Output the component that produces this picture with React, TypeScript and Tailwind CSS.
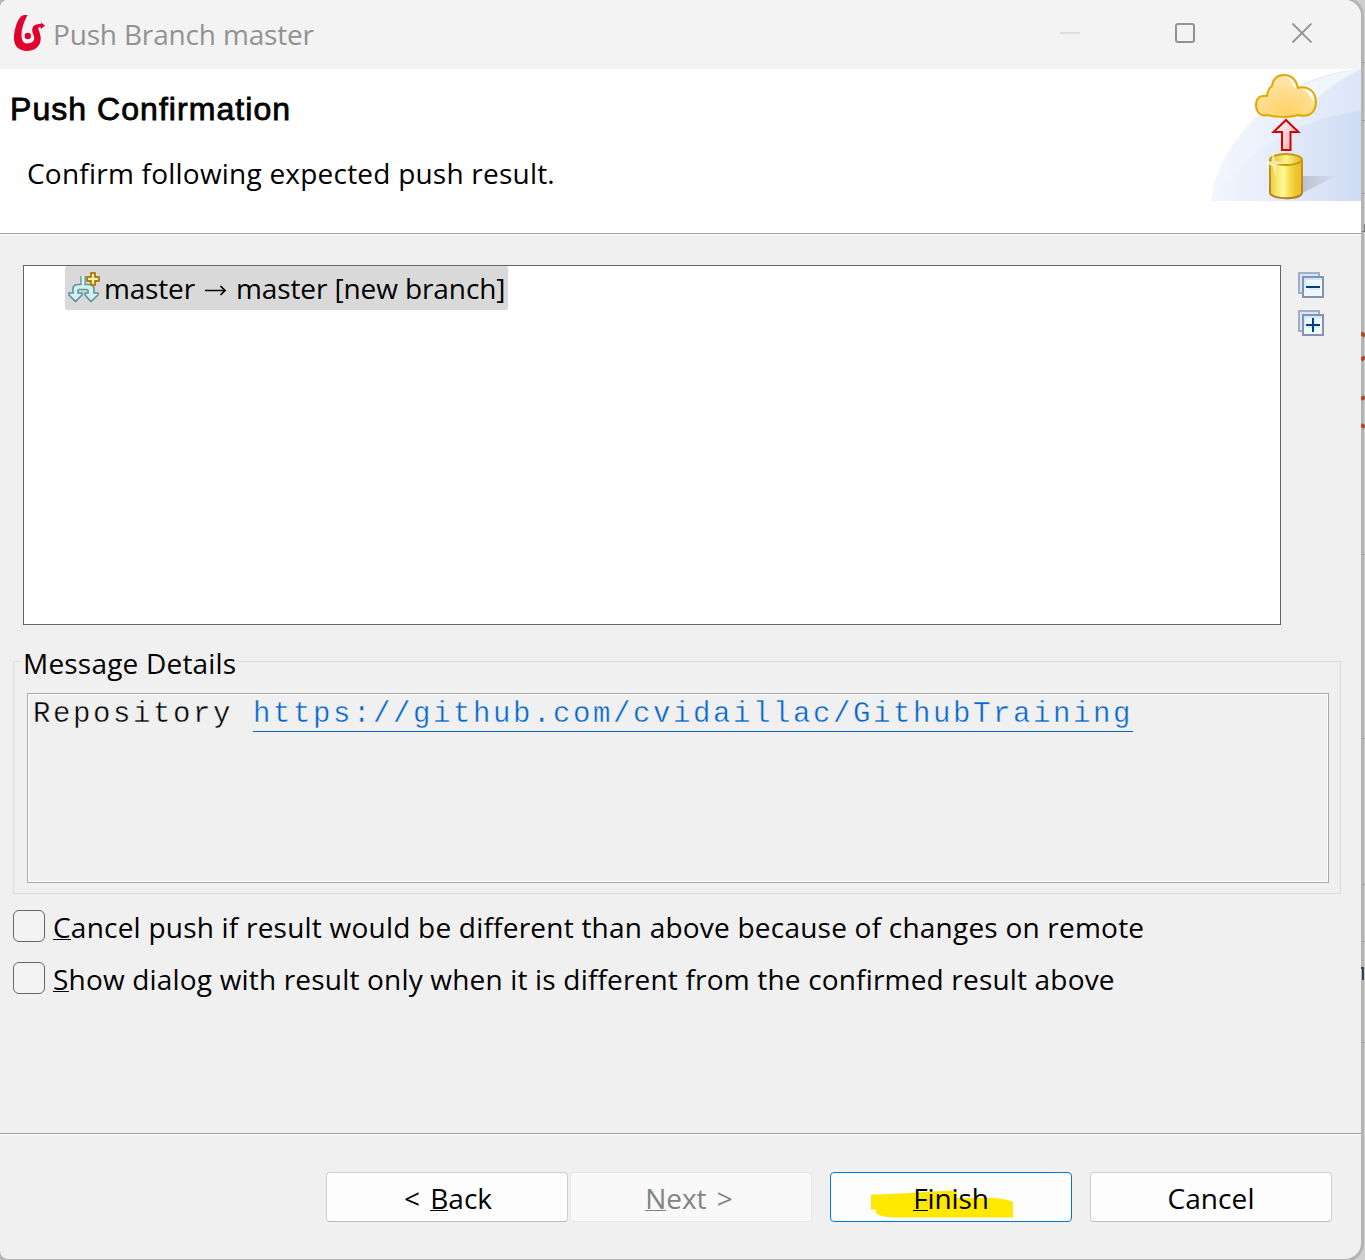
import type { ReactNode } from 'react';

const ui = "font-['Open_Sans','Noto_Sans',sans-serif] text-[28px] leading-[40px] whitespace-pre";

function Logo() {
  return (
    <svg width="32" height="38" viewBox="0 0 32 38" className="shrink-0">
      <path d="M11 1 H14.500 C11 8 8.500 14 8.500 20.500 C8.500 26 10 29.500 14 29.500 C19.500 29.500 22 26.500 21 22.500 C20 19.500 18.500 17 19.500 14 C20.500 11 23 10 28 10 L27.500 8.200 L32 11.500 L28 15 L27.500 13 C25 13 25 14.500 26 17 C27.500 20.500 28.500 24.500 27 29 C25 34 20 37 14 37 C6 37 1.300 32 1 25.500 C0.700 17 4 5.500 8.500 2 Z" fill="#e2002d" />
      <circle cx="14.800" cy="22" r="3.200" fill="#e2002d" />
    </svg>
  );
}

function Banner() {
  return (
    <svg width="150" height="132" viewBox="0 0 150 132" className="shrink-0">
      <defs>
        <linearGradient id="sweep" x1="0" x2="1"><stop offset="0" stopColor="#f3f7fe" /><stop offset="0.5" stopColor="#e9effb" /><stop offset="1" stopColor="#dce6f8" /></linearGradient>
        <linearGradient id="inner" x1="0" x2="1"><stop offset="0" stopColor="#eef3fc" stopOpacity="0.2" /><stop offset="1" stopColor="#cfdbf5" /></linearGradient>
        <linearGradient id="sheen" x1="0" x2="1"><stop offset="0" stopColor="#ffffff" stopOpacity="0.3" /><stop offset="1" stopColor="#f1f5fd" /></linearGradient>
        <radialGradient id="cloud" cx="0.5" cy="0.85" r="0.75"><stop offset="0" stopColor="#ffd266" /><stop offset="1" stopColor="#ffe5a8" /></radialGradient>
        <linearGradient id="side" x1="0" x2="1"><stop offset="0" stopColor="#ecce3c" /><stop offset="0.2" stopColor="#f8e468" /><stop offset="0.42" stopColor="#fffa9c" /><stop offset="0.6" stopColor="#f7dd55" /><stop offset="0.8" stopColor="#efc52d" /><stop offset="1" stopColor="#edbd2b" /></linearGradient>
        <linearGradient id="lid" x1="0" x2="1"><stop offset="0" stopColor="#dfba23" /><stop offset="0.5" stopColor="#fdf38c" /><stop offset="1" stopColor="#e2b422" /></linearGradient>
        <linearGradient id="rim" x1="0" y1="0" x2="0" y2="1"><stop offset="0" stopColor="#c99c00" /><stop offset="1" stopColor="#b57b32" /></linearGradient>
        <linearGradient id="arrow" x1="0" x2="1" y2="1"><stop offset="0" stopColor="#ffffff" /><stop offset="1" stopColor="#f1a6a6" /></linearGradient>
        <linearGradient id="shade" x1="0" x2="1"><stop offset="0" stopColor="#b9bfcd" /><stop offset="1" stopColor="#ccd4e5" stopOpacity="0.5" /></linearGradient>
      </defs>
      <path d="M0 132 C4 82 62 6 150 0 V132 Z" fill="url(#sweep)" />
      <path d="M51 42 C80 20 112 4 150 0 C123 13 103 29 88 51 Z" fill="url(#sheen)" />
      <path d="M0 132 C32 82 92 48 150 42 V132 Z" fill="url(#inner)" />
      <path d="M91 107 H126 L91 124 Z" fill="url(#shade)" />
      <path d="M56 27 C56.500 22 58 19 61 17 C62 10 66 6 73 6 C80 6 85 10 87 19 C96 16 105 22 105 33 C105 43 98 49 87 46 C79 49 63 48 56 46 C50 48 45 43 45 36 C45 29 50 25.500 56 27 Z" fill="url(#cloud)" stroke="#e6a600" strokeWidth="2" strokeLinejoin="round" />
      <path d="M74 8 C81 8 84 13 85.500 20 L81 16 C81 12 79 10 74 8 Z M92 21 C99 19 103 25 103 33 C99 29 99 24 92 21 Z" fill="white" />
      <path d="M75 51 L87.500 63 H79.500 V81 H71 V63 H62.500 Z" fill="url(#arrow)" stroke="#d60000" strokeWidth="2" />
      <path d="M59 91 V124 C61 131 89 131 91 124 V91" fill="url(#side)" stroke="url(#rim)" strokeWidth="2" />
      <ellipse cx="75" cy="90.500" rx="16" ry="5.500" fill="url(#lid)" stroke="#c59a08" strokeWidth="2" />
      <path d="M62 80 L64 92 L73 94 L65 96 L65 108 L62 97 L52 94 L61 92 Z" fill="#fffce5" opacity="0.7" />
    </svg>
  );
}

function BranchIcon() {
  return (
    <svg width="32" height="32" viewBox="0 0 32 32" className="shrink-0">
      <path d="M13 4 V14.500 M17 4 V14.500" stroke="#62949a" strokeWidth="1.500" />
      <path d="M15 4 V16" stroke="#d9f3f4" strokeWidth="2.500" />
      <path d="M13.500 12.500 H10 Q5 12.500 5 17 V21 H1 V23 L7.500 29.500 L14 23 V21 H10 V18.500 Q10 17.500 11.500 17.500 H18.500 Q20 17.500 20 18.500 V21 H17 V23 L23 29.500 L30 23 V21 H26 V17 Q26 12.500 21 12.500 H16.500" fill="#cff3f5" stroke="#62949a" strokeWidth="1.700" />
      <path d="M23 1 H27 V5 H31 V9 H27 V13 H23 V9 H19 V5 H23 Z" fill="#fff0ae" stroke="#b27d15" strokeWidth="2" strokeLinejoin="round" />
    </svg>
  );
}

function TreeButton({ plus = false, label }: { plus?: boolean; label: string }) {
  return (
    <button aria-label={label} className="block h-[26px] w-[26px]">
      <svg width="26" height="26" viewBox="0 0 26 26">
        <rect x="1" y="1" width="20" height="20" fill="#cfe9fb" stroke="#a3adc4" strokeWidth="2" />
        <rect x="5" y="5" width="20" height="20" fill="#cde8fc" stroke="#8792ac" strokeWidth="2" />
        <path d="M8 8 H24 V24 H6 V20 Z" fill="#f0f8ff" />
        <path d="M10 17 H22" stroke="#cfe8fc" strokeWidth="1.500" />
        <path d={plus ? 'M8 15 H22 M15 8 V22' : 'M8 15 H22'} stroke="#003f7d" strokeWidth="2" />
      </svg>
    </button>
  );
}

function Key({ children }: { children: ReactNode }) {
  return <span className="inline-block h-[33px] border-b border-current align-top">{children}</span>;
}

function Check({ children }: { children: ReactNode }) {
  return (
    <label className="flex h-[52px] items-start">
      <span className="mt-[3px] mr-2 h-8 w-8 rounded-[6px] border-[1.5px] border-[#666] bg-[#f3f3f3]" />
      <span>{children}</span>
    </label>
  );
}

const button = 'flex h-[50px] w-[242px] items-start justify-center rounded-[4px] border pt-[5px]';

export default function App() {
  return (
    <div className={`relative flex h-[1260px] w-[1365px] overflow-hidden bg-[#cfcfcf] text-black ${ui}`}>
      <div className="flex h-[1259px] w-[1361px] flex-col overflow-hidden rounded-l-[8px] rounded-r-[16px] bg-[#f0f0f0] shadow-[0_0_0_3px_#b4b4b4]">
        <header className="flex h-[69px] shrink-0 items-start bg-[#f3f3f3] text-[#929292]">
          <div className="ml-[13px] mt-[14px]"><Logo /></div>
          <h1 className="ml-[8px] mt-[14px] grow font-normal tracking-[-0.17px]">Push Branch master</h1>
          <svg width="252" height="20" viewBox="0 0 252 20" fill="none" className="mr-[49px] mt-[23px]">
            <path d="M0 10 H20" stroke="#dedede" strokeWidth="2" />
            <rect x="116" y="1" width="18" height="18" rx="2" stroke="#929292" strokeWidth="2" />
            <path d="M232.500 0.500 L251.500 19.500 M251.500 0.500 L232.500 19.500" stroke="#929292" strokeWidth="1.800" />
          </svg>
        </header>
        <section className="flex h-[165px] shrink-0 items-start justify-between border-b border-[#a0a0a0] bg-white">
          <div>
            <h2 className="ml-[10px] mt-[20px] font-['Liberation_Sans',sans-serif] text-[32px] leading-[40px] font-normal tracking-[1.05px] [-webkit-text-stroke:0.8px_black]">Push Confirmation</h2>
            <p className="ml-[27px] mt-[24px] tracking-[0.22px]">Confirm following expected push result.</p>
          </div>
          <Banner />
        </section>
        <main className="flex h-[900px] shrink-0 flex-col border-b border-[#a0a0a0] border-t border-t-white">
          <div className="flex pt-[30px] pl-[23px]">
            <div className="h-[360px] w-[1258px] border border-[#646464] bg-white pl-[41px]">
              <div className="flex h-[44px] w-[443px] items-start rounded-[2px] bg-[#d9d9d9] pl-[3px]">
                <div className="mt-[6px]"><BranchIcon /></div>
                <div className="ml-[4px] mt-[2px] flex tracking-[-0.18px]">
                  <span>master</span>
                  <svg width="41" height="40" fill="none" stroke="black" strokeWidth="1.700"><path d="M10 22.500 H30 M25.500 18 L30 22.500 L25.500 27" /></svg>
                  <span className="tracking-[-0.1px]">master [new branch]</span>
                </div>
              </div>
            </div>
            <div className="ml-[17px] mt-[7px] flex flex-col gap-3">
              <TreeButton label="Collapse all" />
              <TreeButton label="Expand all" plus />
            </div>
          </div>
          <fieldset className="relative ml-[13px] mt-[36px] h-[233px] w-[1328px] min-w-0 border border-[#dcdcdc] pt-[31px] pl-[13px]">
            <div className="absolute left-[6px] top-[-19px] bg-[#f0f0f0] pr-[2px] pl-[3px] tracking-[0.2px]">Message Details</div>
            <div className="h-[190px] w-[1302px] border border-[#a5a8ad] bg-[#f0f0f0] pl-[5px] font-['Liberation_Mono',monospace] text-[29px] leading-[42px] tracking-[2.597px] shadow-[inset_0_0_0_1px_white] [-webkit-text-stroke:0.4px_#f0f0f0]">
              Repository <a href="#" className="inline-block h-[38px] border-b border-[#0066cc] align-top text-[#0066cc]">https://github.com/cvidaillac/GithubTraining</a>
            </div>
          </fieldset>
          <div className="mt-[13px] ml-[13px]">
            <Check><span className="tracking-[0.22px]"><Key>C</Key>ancel push if result would be different than above because of changes on remote</span></Check>
            <Check><span className="tracking-[0.18px]"><Key>S</Key>how dialog with result only when it is different from the confirmed result above</span></Check>
          </div>
        </main>
        <footer className="flex grow border-t border-white pt-[37px] pl-[326px]">
          <button className={`${button} border-[#d0d0d0] border-b-[#bababa] bg-[#fdfdfd] pl-[2px] [word-spacing:3px]`}>&lt; <Key>B</Key>ack</button>
          <button className={`${button} ml-[2px] border-[#e7e7e7] bg-[#f9f9f9] pr-[4px] text-[#838383] [word-spacing:3px]`}><Key>N</Key>ext &gt;</button>
          <button className={`${button} relative ml-[18px] border-[#0078d4] bg-[#fdfdfd] tracking-[-0.15px]`}>
            <svg width="144" height="28" viewBox="0 0 144 28" className="absolute left-[40px] top-[17px]">
              <path d="M0 4.500 C32 4 62 1 86 0.500 V8 H121 Q133 8 142 12 V27.500 H31 Q10 28 5 23 V19.500 H0 Z" fill="#ffe800" />
            </svg>
            <span className="relative"><Key>F</Key>inish</span>
          </button>
          <button className={`${button} ml-[18px] border-[#d0d0d0] border-b-[#bababa] bg-[#fdfdfd] tracking-[0.1px]`}>Cancel</button>
        </footer>
      </div>
      <svg width="4" height="1260" viewBox="0 0 4 1260" fill="none" className="absolute right-0 top-0">
        <path d="M0 62.500 H4 M0 120.500 H4 M0 193.500 H4 M0 554.500 H4 M0 738.500 H4 M0 884.500 H4 M0 941.500 H4 M0 1042.500 H4" stroke="#a3a3a3" />
        <path d="M1 231.500 H4 M3.500 224 V231" stroke="#777" />
        <path d="M0 333 L4 336 M0 360 L4 357 M0 399 L4 397 M0 425 L4 427" stroke="#ad4632" strokeWidth="4" />
        <path d="M0 968 H2 V980" stroke="#39405c" strokeWidth="2" />
      </svg>
    </div>
  );
}
